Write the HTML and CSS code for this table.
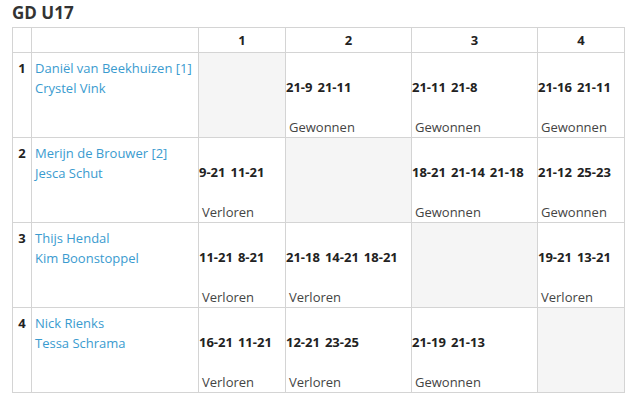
FILE: index.html
```html
<!DOCTYPE html>
<html>
<head>
<meta charset="utf-8">
<link rel="stylesheet" href="styles.css">
</head>
<body>
<h2 class="title">GD U17</h2>
<table class="poule">
  <colgroup>
    <col class="c-num"><col class="c-name"><col class="c-1"><col class="c-2"><col class="c-3"><col class="c-4">
  </colgroup>
  <thead>
    <tr><th></th><th></th><th>1</th><th>2</th><th>3</th><th>4</th></tr>
  </thead>
  <tbody>
    <tr>
      <td class="num">1</td>
      <td class="names"><a>Daniël van Beekhuizen [1]</a><a>Crystel Vink</a></td>
      <td class="self"></td>
      <td class="match"><div class="score"><span>21-9</span><span>21-11</span></div><div class="result">Gewonnen</div></td>
      <td class="match"><div class="score"><span>21-11</span><span>21-8</span></div><div class="result">Gewonnen</div></td>
      <td class="match"><div class="score"><span>21-16</span><span>21-11</span></div><div class="result">Gewonnen</div></td>
    </tr>
    <tr>
      <td class="num">2</td>
      <td class="names"><a>Merijn de Brouwer [2]</a><a>Jesca Schut</a></td>
      <td class="match"><div class="score"><span>9-21</span><span>11-21</span></div><div class="result">Verloren</div></td>
      <td class="self"></td>
      <td class="match"><div class="score"><span>18-21</span><span>21-14</span><span>21-18</span></div><div class="result">Gewonnen</div></td>
      <td class="match"><div class="score"><span>21-12</span><span>25-23</span></div><div class="result">Gewonnen</div></td>
    </tr>
    <tr>
      <td class="num">3</td>
      <td class="names"><a>Thijs Hendal</a><a>Kim Boonstoppel</a></td>
      <td class="match"><div class="score"><span>11-21</span><span>8-21</span></div><div class="result">Verloren</div></td>
      <td class="match"><div class="score"><span>21-18</span><span>14-21</span><span>18-21</span></div><div class="result">Verloren</div></td>
      <td class="self"></td>
      <td class="match"><div class="score"><span>19-21</span><span>13-21</span></div><div class="result">Verloren</div></td>
    </tr>
    <tr>
      <td class="num">4</td>
      <td class="names"><a>Nick Rienks</a><a>Tessa Schrama</a></td>
      <td class="match"><div class="score"><span>16-21</span><span>11-21</span></div><div class="result">Verloren</div></td>
      <td class="match"><div class="score"><span>12-21</span><span>23-25</span></div><div class="result">Verloren</div></td>
      <td class="match"><div class="score"><span>21-19</span><span>21-13</span></div><div class="result">Gewonnen</div></td>
      <td class="self"></td>
    </tr>
  </tbody>
</table>
</body>
</html>
```

FILE: styles.css
```css
* { box-sizing: border-box; }
body {
  margin: 0;
  padding: 0 16px 0 12px;
  background: #fff;
  font-family: "Open Sans", "Liberation Sans", sans-serif;
  font-size: 13px;
  color: #333;
}
.title {
  margin: 0;
  height: 27px;
  padding-top: 1px;
  font-size: 17px;
  font-weight: 700;
  line-height: 24px;
  color: #333;
}
.poule {
  border-collapse: collapse;
  width: 613px;
  table-layout: fixed;
}
.c-num { width: 19px; }
.c-name { width: 167px; }
.c-1 { width: 87px; }
.c-2 { width: 126px; }
.c-3 { width: 126px; }
.c-4 { width: 87px; }
.poule th, .poule td {
  border: 1px solid #d4d4d4;
  padding: 0;
}
.poule th {
  height: 25px;
  text-align: center;
  font-weight: 700;
  font-size: 13px;
  color: #222;
  line-height: 24px;
}
.poule td {
  height: 84px;
  vertical-align: top;
  padding-top: 6px;
  line-height: 19.5px;
}
.num {
  font-weight: 700;
  text-align: center;
  color: #222;
}
.names { padding-left: 3px !important; }
.names a {
  display: block;
  color: #3a9bcf;
  text-decoration: none;
}
.self { background: #f5f5f5; }
.match { padding-left: 0 !important; }
.score {
  margin-top: 19px;
  font-weight: 700;
  color: #222;
  white-space: nowrap;
}
.score span { margin-right: 5px; }
.result {
  margin-top: 20px;
  padding-left: 3px;
  color: #444;
}
```
